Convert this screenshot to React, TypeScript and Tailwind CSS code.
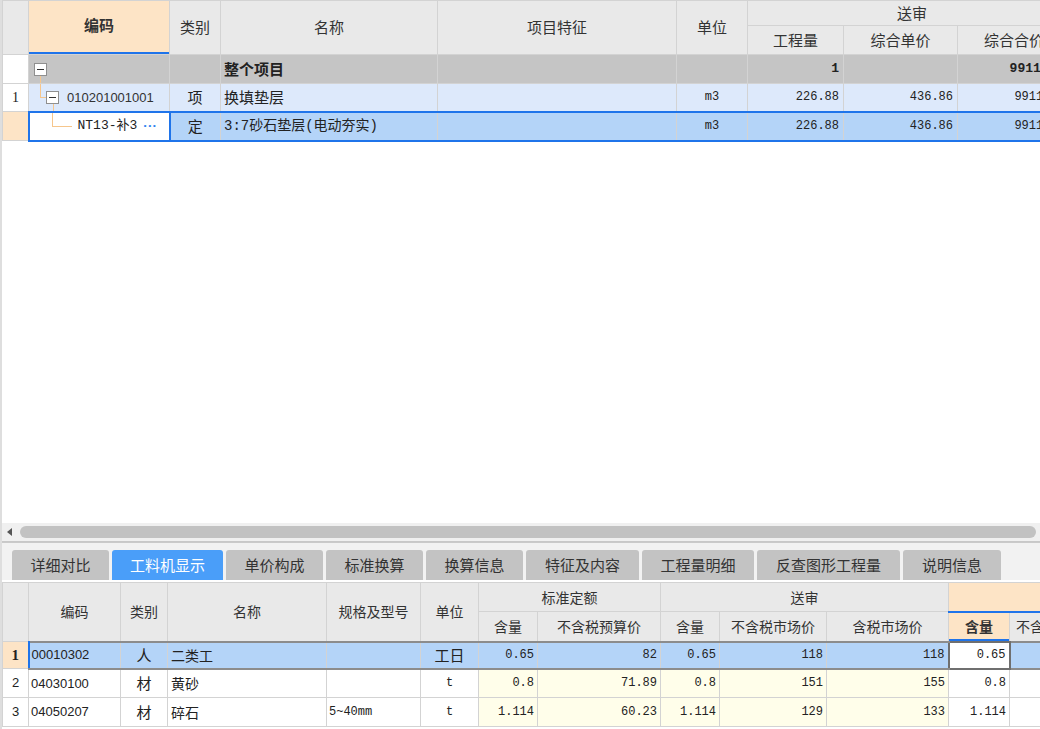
import React from 'react';

const cjk = "font-['Microsoft_YaHei','Noto_Sans_CJK_SC',sans-serif]";
const mono = "font-['Liberation_Mono','Noto_Sans_CJK_SC',monospace]";
const sans = "font-['Liberation_Sans','Noto_Sans_CJK_SC',sans-serif]";
const serif = "font-['Liberation_Serif',serif]";

const grid = 'border border-[#d3d3d3]';
const base = 'p-0 overflow-hidden whitespace-nowrap';
const td = `${grid} ${base}`;
// selected row cells: blue top/bottom, grey sides
const selTop = `${base} border-x border-x-[#d3d3d3] border-y-2 border-y-[#1f74ea]`;

const thBase = `bg-[#e9e9e9] text-[#333] text-[15px] ${cjk} p-0 ${grid}`;
const th = `${thBase} font-normal`;

function MinusBox() {
    return (
        <span className="relative inline-flex w-[13px] h-[13px] items-center justify-center border border-[#8f8f8f] bg-white shrink-0">
            <span className="block w-[7px] h-px bg-[#333]" />
        </span>
    );
}

function TopTable() {
    return (
        <table className="table-fixed border-collapse w-[1074px] text-[#222]">
            <colgroup>
                <col className="w-[26px]" />
                <col className="w-[141px]" />
                <col className="w-[51px]" />
                <col className="w-[217px]" />
                <col className="w-[239px]" />
                <col className="w-[71px]" />
                <col className="w-[96px]" />
                <col className="w-[114px]" />
                <col className="w-[119px]" />
            </colgroup>
            <thead>
                <tr className="h-[25px]">
                    <th rowSpan={2} className={th} />
                    <th rowSpan={2} className={`${base} ${grid} bg-[#fde4c6] text-[#333] text-[15px] ${cjk} font-bold relative`}>
                        <span className="relative -top-[2px]">编码</span>
                        <span className="absolute left-0 right-0 bottom-0 h-[2px] bg-[#1f74ea]" />
                    </th>
                    <th rowSpan={2} className={th}>类别</th>
                    <th rowSpan={2} className={th}>名称</th>
                    <th rowSpan={2} className={th}>项目特征</th>
                    <th rowSpan={2} className={th}>单位</th>
                    <th colSpan={3} className={th}>送审</th>
                </tr>
                <tr className="h-[29px]">
                    <th className={th}>工程量</th>
                    <th className={th}>综合单价</th>
                    <th className={`${th} text-left pl-[26px]`}>综合合价</th>
                </tr>
            </thead>
            <tbody>
                {/* 整个项目 */}
                <tr className="h-[29px] bg-[#c5c5c5]">
                    <td className={`${td} bg-white`} />
                    <td className={`${td} relative`}>
                        <span className="absolute left-[11px] top-[19px] bottom-0 w-px bg-[#f6c68c]" />
                        <div className="flex items-center pl-[5px]">
                            <MinusBox />
                        </div>
                    </td>
                    <td className={td} />
                    <td className={`${td} pl-[3px] text-[15px] font-bold ${cjk}`}>整个项目</td>
                    <td className={td} />
                    <td className={td} />
                    <td className={`${td} text-right pr-[4px] text-[13px] font-bold ${mono}`}>1</td>
                    <td className={td} />
                    <td className={`${td} text-right pr-[4px] text-[13px] font-bold ${mono}`}>99114.80</td>
                </tr>
                {/* 清单 */}
                <tr className="h-[28px] bg-[#dde9fb]">
                    <td className={`${td} bg-white text-center text-[14px] ${serif}`}>1</td>
                    <td className={`${td} relative`}>
                        <span className="absolute left-[11px] top-0 h-[13px] w-px bg-[#f6c68c]" />
                        <span className="absolute left-[11px] top-[13px] w-[6px] h-px bg-[#f6c68c]" />
                        <span className="absolute left-[24px] top-[20px] bottom-0 w-px bg-[#f6c68c]" />
                        <div className="flex items-center pl-[17px]">
                            <MinusBox />
                            <span className={`ml-[8px] text-[13px] text-[#333] ${sans}`}>010201001001</span>
                        </div>
                    </td>
                    <td className={`${td} text-center text-[15px] ${cjk}`}>项</td>
                    <td className={`${td} pl-[3px] text-[15px] ${cjk}`}>换填垫层</td>
                    <td className={td} />
                    <td className={`${td} text-center text-[12px] ${mono}`}>m3</td>
                    <td className={`${td} text-right pr-[4px] text-[12px] ${mono}`}>226.88</td>
                    <td className={`${td} text-right pr-[4px] text-[12px] ${mono}`}>436.86</td>
                    <td className={`${td} text-right pr-[4px] text-[12px] ${mono}`}>99114.80</td>
                </tr>
                {/* 定额 selected */}
                <tr className="h-[29px] bg-[#b4d4f8]">
                    <td className={`${td} bg-[#fde4c6]`} />
                    <td className={`${base} relative bg-white border-2 border-[#1f74ea]`}>
                        <span className="absolute left-[22px] top-0 h-[13px] w-px bg-[#f6c68c]" />
                        <span className="absolute left-[22px] top-[13px] w-[20px] h-px bg-[#f6c68c]" />
                        <div className="flex items-center pl-[48px]">
                            <span className={`text-[13px] text-[#222] ${mono}`}>NT13-补3</span>
                            <span className="ml-[6px] text-[#2d82ef] text-[13px] font-bold tracking-[1px]">···</span>
                        </div>
                    </td>
                    <td className={`${selTop} text-center text-[15px] ${cjk}`}>定</td>
                    <td className={`${selTop} pl-[3px] text-[14px] ${mono}`}>3:7砂石垫层(电动夯实)</td>
                    <td className={selTop} />
                    <td className={`${selTop} text-center text-[12px] ${mono}`}>m3</td>
                    <td className={`${selTop} text-right pr-[4px] text-[12px] ${mono}`}>226.88</td>
                    <td className={`${selTop} text-right pr-[4px] text-[12px] ${mono}`}>436.86</td>
                    <td className={`${selTop} text-right pr-[4px] text-[12px] ${mono}`}>99114.80</td>
                </tr>
            </tbody>
        </table>
    );
}

const tabs = ['详细对比', '工料机显示', '单价构成', '标准换算', '换算信息', '特征及内容', '工程量明细', '反查图形工程量', '说明信息'];
const tabWidths = ['w-[97px]', 'w-[111px]', 'w-[97px]', 'w-[97px]', 'w-[97px]', 'w-[113px]', 'w-[112px]', 'w-[143px]', 'w-[98px]'];

function Tabs() {
    return (
        <div className="h-[38px] bg-[#f2f2f2] flex items-end gap-[3px] pl-[10px] border-t border-[#cacaca]">
            {tabs.map((t, i) => (
                <div
                    key={t}
                    className={`${tabWidths[i]} h-[30px] rounded-t-[3px] flex items-center justify-center text-[15px] ${cjk} ${
                        i === 1 ? 'bg-[#4a9ef9] text-white' : 'bg-[#c3c3c3] text-[#333]'
                    }`}
                >
                    {t}
                </div>
            ))}
        </div>
    );
}

const bthBase = `bg-[#e9e9e9] text-[#333] text-[14px] ${cjk} p-0`;
const bth = `${bthBase} ${grid} font-normal`;
const sel = `${base} border-x border-x-[#d3d3d3] border-y-2 border-y-[#8c8c8c] bg-[#b4d4f8]`;

function BottomTable() {
    const rows = [
        { n: '2', code: '04030100', type: '材', name: '黄砂', spec: '', unit: 't', q1: '0.8', p1: '71.89', q2: '0.8', p2: '151', p3: '155', q3: '0.8' },
        { n: '3', code: '04050207', type: '材', name: '碎石', spec: '5~40mm', unit: 't', q1: '1.114', p1: '60.23', q2: '1.114', p2: '129', p3: '133', q3: '1.114' },
    ];
    return (
        <table className="table-fixed border-collapse w-[1107px] text-[#222] mt-[2px]">
            <colgroup>
                <col className="w-[26px]" />
                <col className="w-[92px]" />
                <col className="w-[47px]" />
                <col className="w-[159px]" />
                <col className="w-[94px]" />
                <col className="w-[58px]" />
                <col className="w-[59px]" />
                <col className="w-[123px]" />
                <col className="w-[59px]" />
                <col className="w-[107px]" />
                <col className="w-[122px]" />
                <col className="w-[61px]" />
                <col className="w-[100px]" />
            </colgroup>
            <thead>
                <tr className="h-[29px]">
                    <th rowSpan={2} className={bth} />
                    <th rowSpan={2} className={bth}>编码</th>
                    <th rowSpan={2} className={bth}>类别</th>
                    <th rowSpan={2} className={bth}>名称</th>
                    <th rowSpan={2} className={bth}>规格及型号</th>
                    <th rowSpan={2} className={bth}>单位</th>
                    <th colSpan={2} className={bth}>标准定额</th>
                    <th colSpan={3} className={bth}>送审</th>
                    <th colSpan={2} className={`${grid} p-0 bg-[#fde4c6]`} />
                </tr>
                <tr className="h-[30px]">
                    <th className={bth}>含量</th>
                    <th className={bth}>不含税预算价</th>
                    <th className={bth}>含量</th>
                    <th className={bth}>不含税市场价</th>
                    <th className={bth}>含税市场价</th>
                    <th className={`p-0 text-[#333] text-[14px] ${cjk} bg-[#fde4c6] font-bold relative border-x border-x-[#d3d3d3] border-b border-b-[#d3d3d3] border-t-2 border-t-[#1f74ea]`}>
                        含量
                        <span className="absolute left-0 right-0 bottom-0 h-[2px] bg-[#1f74ea]" />
                    </th>
                    <th className={`${bthBase} font-normal text-left pl-[6px] border-x border-x-[#d3d3d3] border-b border-b-[#d3d3d3] border-t-2 border-t-[#1f74ea]`}>不含税</th>
                </tr>
            </thead>
            <tbody>
                <tr className="h-[27px]">
                    <td className={`${td} bg-[#fde4c6] text-center text-[15px] font-bold ${serif}`}>1</td>
                    <td className={`${base} border-r border-r-[#d3d3d3] border-y-2 border-y-[#8c8c8c] border-l-2 border-l-[#1f74ea] bg-[#b4d4f8] pl-[2px] text-[13px] ${sans}`}>00010302</td>
                    <td className={`${sel} text-center text-[15px] ${cjk}`}>人</td>
                    <td className={`${sel} pl-[3px] text-[14px] ${cjk}`}>二类工</td>
                    <td className={sel} />
                    <td className={`${sel} text-center text-[15px] ${cjk}`}>工日</td>
                    <td className={`${sel} text-right pr-[3px] text-[12px] ${mono}`}>0.65</td>
                    <td className={`${sel} text-right pr-[3px] text-[12px] ${mono}`}>82</td>
                    <td className={`${sel} text-right pr-[3px] text-[12px] ${mono}`}>0.65</td>
                    <td className={`${sel} text-right pr-[3px] text-[12px] ${mono}`}>118</td>
                    <td className={`${sel} text-right pr-[3px] text-[12px] ${mono}`}>118</td>
                    <td className={`${base} bg-white border-2 border-[#6f6f6f] text-right pr-[3px] text-[12px] ${mono}`}>0.65</td>
                    <td className={sel} />
                </tr>
                {rows.map((r) => (
                    <tr key={r.n} className="h-[29px] bg-white">
                        <td className={`${td} text-center text-[13px] ${sans}`}>{r.n}</td>
                        <td className={`${td} pl-[2px] text-[13px] ${sans}`}>{r.code}</td>
                        <td className={`${td} text-center text-[15px] ${cjk}`}>{r.type}</td>
                        <td className={`${td} pl-[3px] text-[14px] ${cjk}`}>{r.name}</td>
                        <td className={`${td} pl-[2px] text-[12px] ${mono}`}>{r.spec}</td>
                        <td className={`${td} text-center text-[12px] ${mono}`}>{r.unit}</td>
                        <td className={`${td} bg-[#fffeea] text-right pr-[3px] text-[12px] ${mono}`}>{r.q1}</td>
                        <td className={`${td} bg-[#fffeea] text-right pr-[3px] text-[12px] ${mono}`}>{r.p1}</td>
                        <td className={`${td} bg-[#fffeea] text-right pr-[3px] text-[12px] ${mono}`}>{r.q2}</td>
                        <td className={`${td} bg-[#fffeea] text-right pr-[3px] text-[12px] ${mono}`}>{r.p2}</td>
                        <td className={`${td} bg-[#fffeea] text-right pr-[3px] text-[12px] ${mono}`}>{r.p3}</td>
                        <td className={`${td} text-right pr-[3px] text-[12px] ${mono}`}>{r.q3}</td>
                        <td className={td} />
                    </tr>
                ))}
            </tbody>
        </table>
    );
}

export default function App() {
    return (
        <div className="w-[1040px] h-[729px] overflow-hidden bg-white flex flex-col border-l-2 border-[#dedede]">
            <div className="h-[523px] overflow-hidden shrink-0">
                <TopTable />
            </div>

            {/* horizontal scrollbar */}
            <div className="h-[19px] bg-[#f0f0f0] flex items-center shrink-0 border-b border-[#c8c8c8]">
                <svg width="18" height="10" viewBox="0 0 18 10" className="shrink-0">
                    <path d="M5 5 L10 1 L10 9 Z" fill="#555" />
                </svg>
                <div className="h-[12px] flex-1 mr-[4px] rounded-full bg-[#c2c2c2]" />
            </div>

            <Tabs />
            <div className="overflow-hidden">
                <BottomTable />
            </div>
        </div>
    );
}
